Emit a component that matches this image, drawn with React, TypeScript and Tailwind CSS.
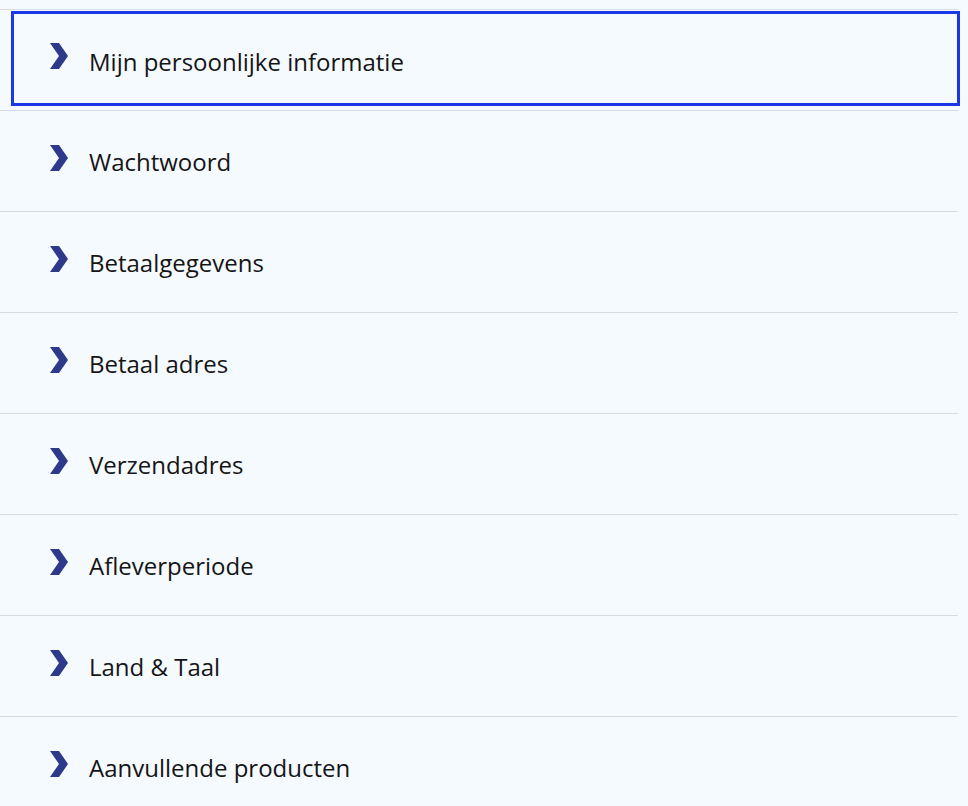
const items = [
  'Mijn persoonlijke informatie',
  'Wachtwoord',
  'Betaalgegevens',
  'Betaal adres',
  'Verzendadres',
  'Afleverperiode',
  'Land & Taal',
  'Aanvullende producten',
];

function Chevron() {
  return (
    <svg width="18" height="26" viewBox="0 0 18 26" className="shrink-0">
      <polygon points="0,0 9,0 18,13 9,26 0,26 9,13" fill="#2d3a8c" />
    </svg>
  );
}

export default function App() {
  return (
    <div className="min-h-[806px] w-full overflow-hidden bg-[#f5faff] pt-[9px] font-['Open_Sans',sans-serif]">
      <ul className="w-[958px]">
        {items.map((label, i) => (
          <li key={label} className="h-[101px] border-t border-[#d6dce2]">
            {i === 0 ? (
              <div className="ml-[11px] mr-[-2px] mt-[1px] flex h-[95px] items-center border-[3px] border-[#1b38e6] pl-[36px]">
                <span className="-mt-[5px] flex">
                  <Chevron />
                </span>
                <span className="ml-[21px] mt-[7px] text-[24px] text-[#151515]">{label}</span>
              </div>
            ) : (
              <div className="flex h-full items-center pl-[50px]">
                <span className="-mt-[6px] flex">
                  <Chevron />
                </span>
                <span className="ml-[21px] mt-[1px] text-[24px] text-[#151515]">{label}</span>
              </div>
            )}
          </li>
        ))}
      </ul>
    </div>
  );
}
